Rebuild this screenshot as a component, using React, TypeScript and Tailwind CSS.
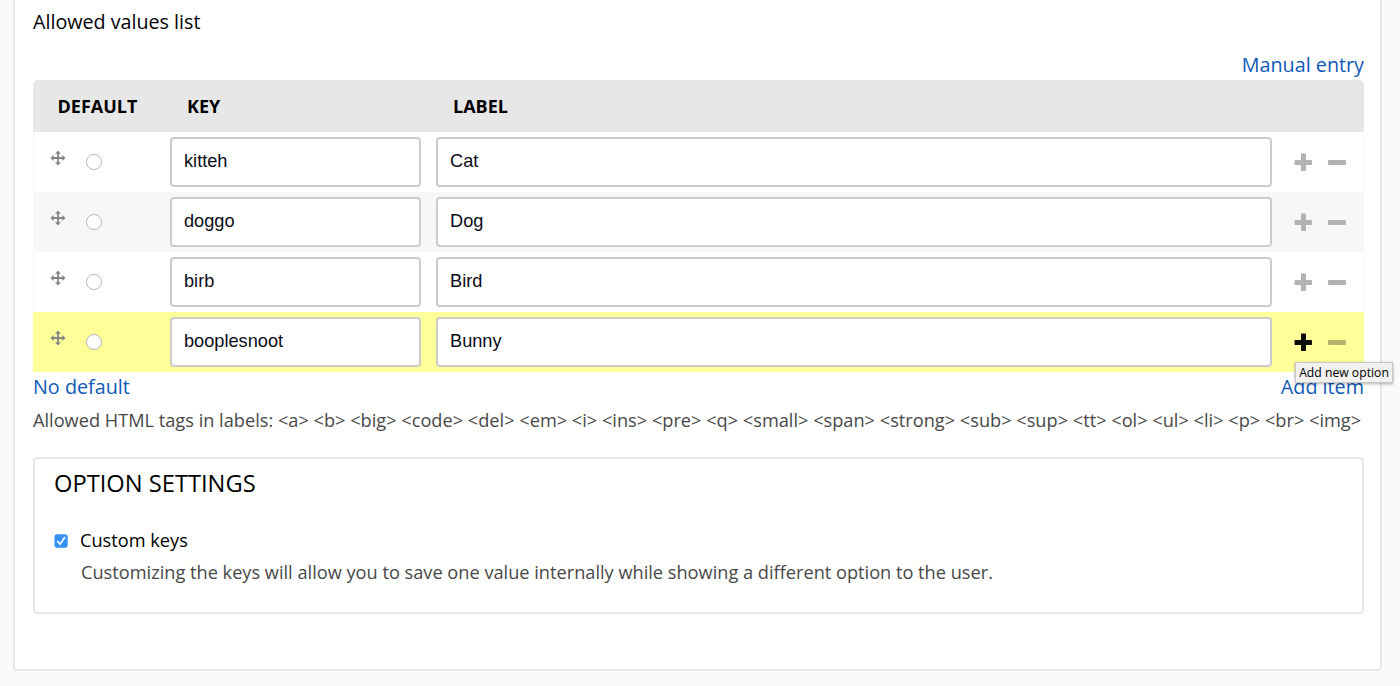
import React from "react";

type Option = { key: string; label: string };

const options: Option[] = [
  { key: "kitteh", label: "Cat" },
  { key: "doggo", label: "Dog" },
  { key: "birb", label: "Bird" },
  { key: "booplesnoot", label: "Bunny" },
];

function MoveIcon() {
  return (
    <svg viewBox="0 0 16 16" className="h-4 w-4 shrink-0" fill="#858585">
      <path d="M8 .4 10.9 3.7H8.9V7.1H12.3V5.1L15.6 8 12.3 10.9V8.9H8.9V12.3H10.9L8 15.6 5.1 12.3H7.1V8.9H3.7V10.9L.4 8 3.7 5.1V7.1H7.1V3.7H5.1Z" />
    </svg>
  );
}

function PlusIcon({ active }: { active: boolean }) {
  return (
    <svg viewBox="0 0 18 18" className="h-[18px] w-[18px]" fill={active ? "#0c0c08" : "#b2b2b2"}>
      <rect x="0.5" y="7" width="17.5" height="5" rx="0.8" />
      <rect x="7" y="0.5" width="5" height="17.5" rx="0.8" />
    </svg>
  );
}

function OptionRow({ option, index }: { option: Option; index: number }) {
  const active = index === 3;
  const tone = active ? "bg-[#ffff99] border-[#ffff99]" : index === 1 ? "bg-[#f7f7f7] border-[#f7f7f7]" : "bg-white border-[#f6f6f6]";
  const field =
    "h-[50px] rounded-[4px] border-2 border-[#cccccc] bg-white px-3 pb-0.5 font-['Liberation_Sans',sans-serif] text-[18.2px] text-[#0b0b18] outline-none";
  return (
    <div className={`flex h-[60px] items-start border-x ${tone}`}>
      <div className="flex w-[136px] shrink-0 pl-4">
        <div className="pt-[18px]">
          <MoveIcon />
        </div>
        <span className="mt-[22px] ml-5 h-4 w-4 rounded-full border border-[#b9b9b9] bg-white" />
      </div>
      <input className={`${field} mt-[5px] w-[251px] shrink-0`} defaultValue={option.key} />
      <input className={`${field} mt-[5px] ml-[15px] w-[836px] shrink-0`} defaultValue={option.label} />
      <div className="mt-[21px] ml-[22px] flex h-[18px] items-center gap-[15.5px]">
        <PlusIcon active={active} />
        <span className={`h-[5px] w-[18px] rounded-[1px] ${active ? "bg-[#b3b36b]" : "bg-[#b2b2b2]"}`} />
      </div>
    </div>
  );
}

export default function App() {
  return (
    <div className="h-[686px] w-[1400px] overflow-hidden bg-[#fafafa] pr-[18px] pl-[13px] font-['Open_Sans',sans-serif] text-black">
      <main className="h-[671px] rounded-b-[4px] border-2 border-t-0 border-[#e8e8e8] bg-white pr-4 pl-[18px]">
        <div className="h-[52px] pt-[8px] text-[19.7px] leading-7 whitespace-nowrap">
          <span>Allowed values list</span>
        </div>
        <div className="flex h-7 justify-end text-[19.75px] leading-[26px] text-[#0f5ab8]">
          <a>Manual entry</a>
        </div>
        <div className="flex h-[52px] items-center rounded-t-[5px] bg-[#e7e7e7] text-[18px] font-bold">
          <span className="w-[129px] pl-[24.5px]">DEFAULT</span>
          <span className="w-[266px] pl-[25px]">KEY</span>
          <span className="pl-[25px]">LABEL</span>
        </div>
        {options.map((option, index) => (
          <OptionRow key={option.key} option={option} index={index} />
        ))}
        <div className="relative flex h-8 justify-between text-[19.75px] leading-[30px] text-[#0f5ab8]">
          <a>No default</a>
          <a>Add item</a>
          <div className="absolute -top-[10px] -right-[29px] flex h-[21px] w-[98px] items-center justify-center border border-[#c6c6c6] bg-[#f1f1f0] pt-px font-['Open_Sans',sans-serif] text-[12.2px] leading-none whitespace-nowrap text-black shadow-[0_1px_3px_rgba(0,0,0,0.3)]">
            <span>Add new option</span>
          </div>
        </div>
        <p className="h-[53px] text-[18.21px] leading-8 whitespace-nowrap text-[#484848]">
          <span>
            {"Allowed HTML tags in labels: <a> <b> <big> <code> <del> <em> <i> <ins> <pre> <q> <small> <span> <strong> <sub> <sup> <tt> <ol> <ul> <li> <p> <br> <img>"}
          </span>
        </p>
        <section className="h-[157px] rounded-[4px] border-2 border-[#e7e7e7] pl-[19px]">
          <h2 className="h-[67px] pt-[8px] text-[23.7px] leading-8">
            <span>OPTION SETTINGS</span>
          </h2>
          <label className="flex h-7 items-center text-[18.2px]">
            <svg viewBox="0 0 14 14" className="mt-px mr-3 h-[14px] w-[14px]">
              <rect x=".5" y=".3" width="13.2" height="13.4" rx="2.8" fill="#3592f5" />
              <path d="m3.7 7.5 2.3 2.7 4.5-6.5" fill="none" stroke="white" strokeWidth="1.7" strokeLinecap="round" />
            </svg>
            <span className="pt-0.5">Custom keys</span>
          </label>
          <p className="pt-[2px] pl-[27px] text-[18.2px] leading-8 whitespace-nowrap text-[#484848]">
            <span>Customizing the keys will allow you to save one value internally while showing a different option to the user.</span>
          </p>
        </section>
      </main>
    </div>
  );
}
